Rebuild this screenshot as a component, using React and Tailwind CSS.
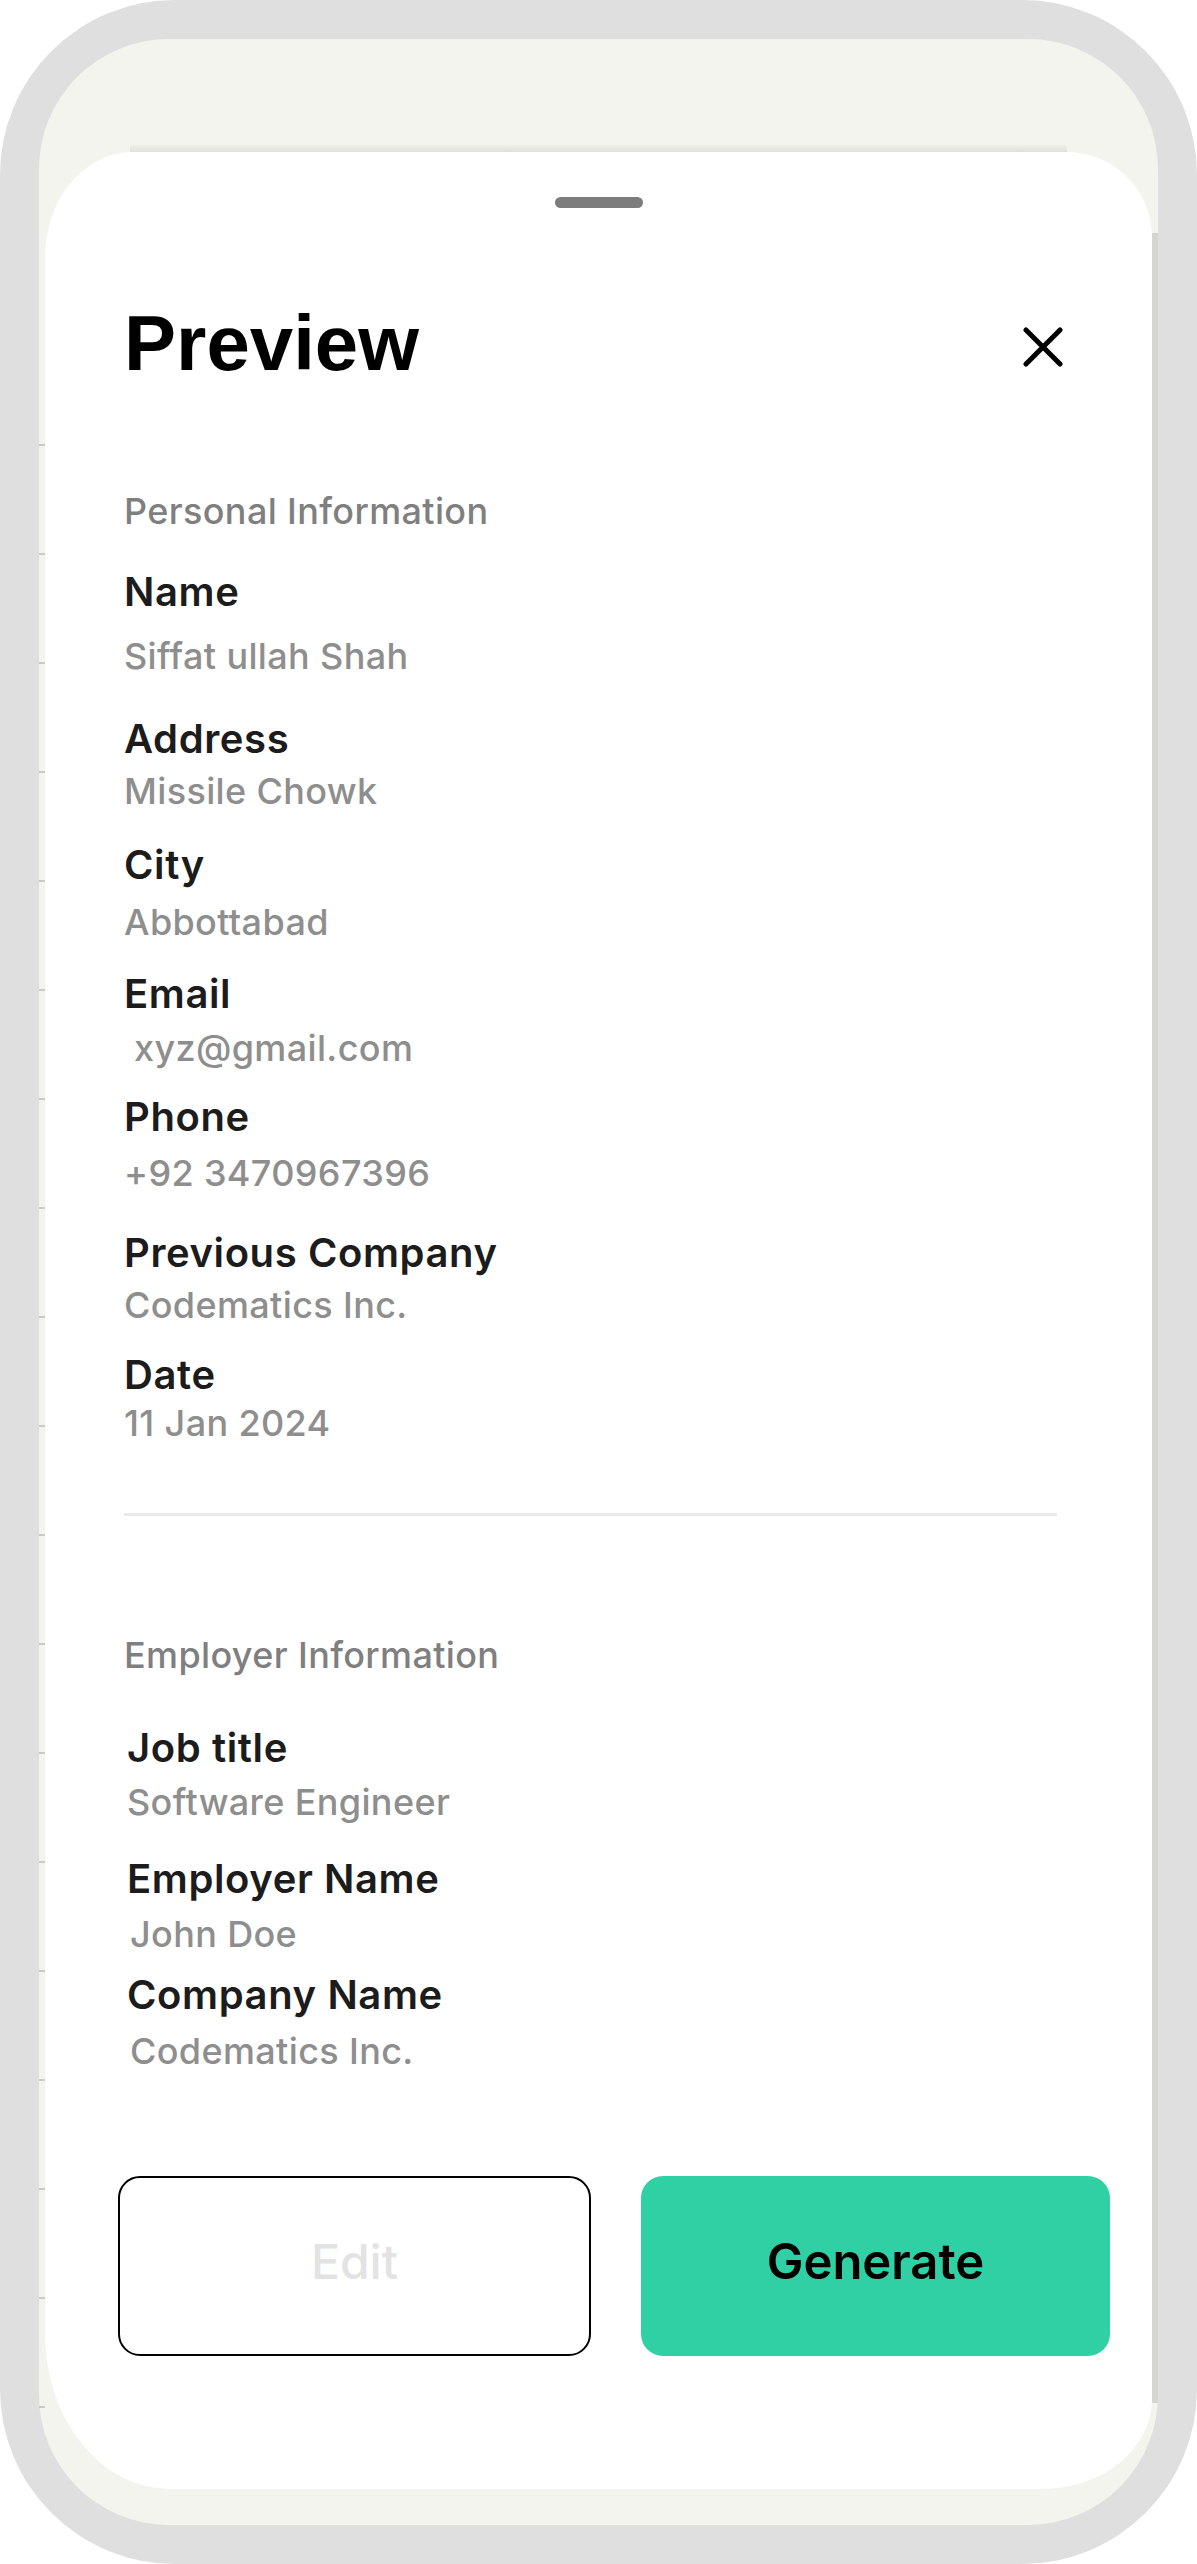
const personal = [
  { label: 'Name', value: 'Siffat ullah Shah', lt: 43, vt: 26 },
  { label: 'Address', value: 'Missile Chowk', lt: 45, vt: 14 },
  { label: 'City', value: 'Abbottabad', lt: 36, vt: 19 },
  { label: 'Email', value: 'xyz@gmail.com', lt: 34, vt: 16, indent: 'ml-[10px]' },
  { label: 'Phone', value: '+92 3470967396', lt: 31, vt: 18 },
  { label: 'Previous Company', value: 'Codematics Inc.', lt: 42, vt: 14 },
  { label: 'Date', value: '11 Jan 2024', lt: 32, vt: 10 },
]

const employer = [
  { label: 'Job title', value: 'Software Engineer', lt: 55, vt: 16, lx: 'ml-[3px]', vx: 'ml-[3px]' },
  { label: 'Employer Name', value: 'John Doe', lt: 39, vt: 17, lx: 'ml-[3px]', vx: 'ml-[6px]' },
  { label: 'Company Name', value: 'Codematics Inc.', lt: 23, vt: 18, lx: 'ml-[3px]', vx: 'ml-[6px]' },
]

const Field = ({ item }) => (
  <>
    <div
      className={`text-[40px] leading-none font-semibold text-[#1c1c1c] tracking-[0.015em] ${item.lx || ''}`}
      style={{ marginTop: item.lt }}
    >
      {item.label}
    </div>
    <div
      className={`text-[36px] leading-none font-medium text-[#8e8e8e] tracking-[0.01em] ${item.indent || item.vx || ''}`}
      style={{ marginTop: item.vt }}
    >
      {item.value}
    </div>
  </>
)

const App = () => {
  const ticks = Array.from({ length: 19 }, (_, i) => i)

  return (
    <div className="w-[1197px] h-[2564px] bg-white font-['Inter',sans-serif]">
      <div className="h-full rounded-[175px] bg-[#dfdfdf] p-[39px] flex">
        <div className="flex-1 rounded-[130px] bg-[#f4f4ee] flex pt-[106px] pb-[36px]">
          {/* left gutter with list separators peeking out */}
          <div className="w-[6px] flex flex-col gap-[107px] pt-[299px]">
            {ticks.map((t) => (
              <div key={t} className="h-[2px] bg-[#cacac2]" />
            ))}
          </div>

          <div className="flex-1 flex flex-col">
            <div className="h-[7px] mx-[85px] bg-gradient-to-b from-[#f0f0ea] to-[#e0e0da]" />

            {/* Sheet */}
            <div className="flex-1 bg-white rounded-tl-[88px_105px] rounded-tr-[85px_85px] rounded-bl-[125px_155px] rounded-br-[110px_90px] flex flex-col">
              <div className="mt-[45px] mx-auto w-[88px] h-[11px] rounded-full bg-[#7c7c7c]" />

              <div className="flex justify-between items-start mt-[96px] ml-[79px] mr-[89px]">
                <h1 className="font-['Liberation_Sans',Arial,sans-serif] font-bold text-[78px] leading-none text-black">
                  Preview
                </h1>
                <svg width="40" height="40" viewBox="0 0 40 40" className="mt-[23px]">
                  <path d="M3 3 L37 37 M37 3 L3 37" stroke="#000" strokeWidth="5" strokeLinecap="round" />
                </svg>
              </div>

              <div className="flex flex-col ml-[79px]">
                <div className="mt-[111px] text-[36px] leading-none font-medium text-[#7f7f7f] tracking-[0.01em]">
                  Personal Information
                </div>
                {personal.map((item) => (
                  <Field key={item.label} item={item} />
                ))}
              </div>

              <div className="mt-[72px] ml-[79px] mr-[95px] h-[3px] bg-[#e9e9e5]" />

              <div className="flex flex-col ml-[79px]">
                <div className="mt-[121px] text-[36px] leading-none font-medium text-[#7f7f7f] tracking-[0.01em]">
                  Employer Information
                </div>
                {employer.map((item) => (
                  <Field key={item.label} item={item} />
                ))}
              </div>

              <div className="flex gap-[50px] mt-[107px] ml-[73px] mr-[42px]">
                <button className="flex-1 h-[180px] pb-[8px] rounded-[22px] border-2 border-black bg-white text-[48px] font-medium text-[#e3e3e3]">
                  Edit
                </button>
                <button className="flex-1 h-[180px] pb-[8px] rounded-[22px] bg-[#2fd1a4] text-[49px] font-semibold text-black">
                  Generate
                </button>
              </div>
            </div>
          </div>

          {/* right gutter shadow */}
          <div className="w-[6px] flex flex-col pt-[88px] pb-[86px]">
            <div className="flex-1 bg-[#d6d6d0]" />
          </div>
        </div>
      </div>
    </div>
  )
}

export default App
